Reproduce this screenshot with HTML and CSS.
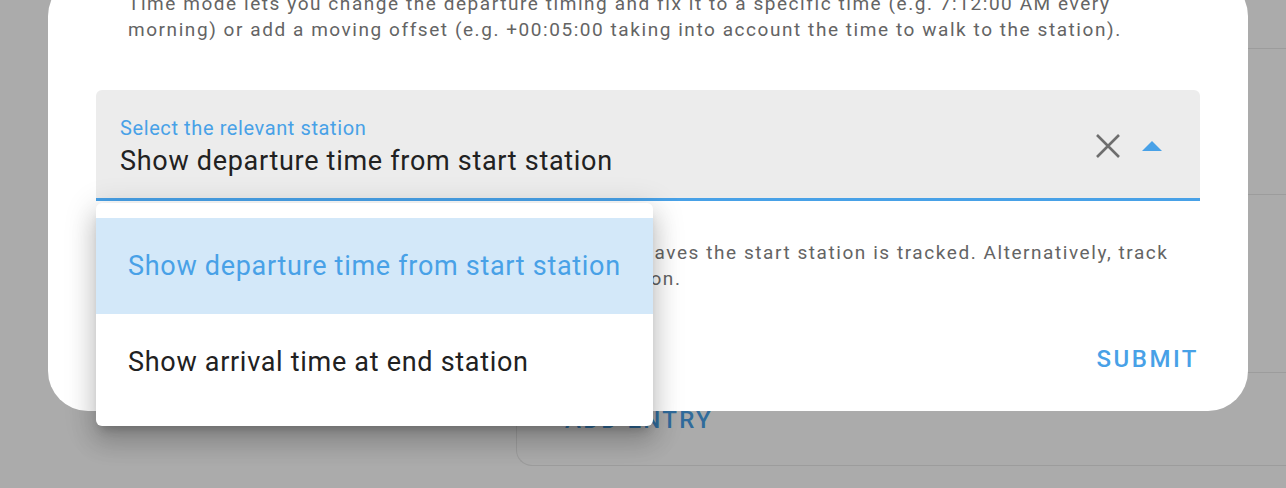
FILE: index.html
```html
<!DOCTYPE html>
<html lang="en">
<head>
<meta charset="utf-8">
<title>Options</title>
<link rel="stylesheet" href="styles.css">
</head>
<body>
<div class="page">
  <div class="card">
    <div class="row row-a"></div>
    <div class="row row-b"></div>
    <div class="row row-c"></div>
    <div class="row row-d"><span class="add-entry">ADD ENTRY</span></div>
  </div>
</div>

<div class="dialog">
  <p class="desc desc-top">Time mode lets you change the departure timing and fix it to a specific time (e.g. 7:12:00 AM every morning) or add a moving offset (e.g. +00:05:00 taking into account the time to walk to the station).</p>

  <div class="field">
    <div class="field-text">
      <div class="field-label">Select the relevant station</div>
      <div class="field-value">Show departure time from start station</div>
    </div>
    <div class="field-icons">
      <svg class="icon-clear" width="24" height="24" viewBox="0 0 24 24"><path d="M1 1 L23 23 M23 1 L1 23" stroke="#6e6e6e" stroke-width="2.6" fill="none"/></svg>
      <svg class="icon-arrow" width="20" height="10" viewBox="0 0 20 10"><polygon points="0,10 10,0 20,10" fill="#48a1e7"/></svg>
    </div>
  </div>

  <p class="desc desc-bottom">In the default mode, the moment at which the train leaves the start station is tracked. Alternatively, track the arrival time of your trains at the destination station.</p>

  <div class="actions">
    <span class="submit">SUBMIT</span>
  </div>
</div>

<div class="menu">
  <div class="menu-item selected">Show departure time from start station</div>
  <div class="menu-item">Show arrival time at end station</div>
</div>
</body>
</html>
```

FILE: styles.css
```css
html, body {
  margin: 0;
  padding: 0;
  width: 1286px;
  height: 488px;
  overflow: hidden;
  background: #ababab;
  font-family: Roboto, "Noto Sans", sans-serif;
}

body {
  position: relative;
}

.page {
  padding-left: 516px;
}

.card {
  border-left: 1px solid #9c9c9c;
  border-bottom: 1px solid #9c9c9c;
  border-radius: 0 0 0 16px;
}

.row {
  border-bottom: 1px solid #9c9c9c;
}

.row-a { height: 48px; }
.row-b { height: 145px; }
.row-c { height: 177px; }
.row-d {
  height: 92px;
  border-bottom: none;
  display: flex;
  align-items: center;
  padding-left: 48px;
}

.add-entry {
  font-size: 24px;
  font-weight: 500;
  letter-spacing: 2.3px;
  color: #306b9b;
  line-height: 36px;
  margin-top: 2px;
}

.dialog {
  position: absolute;
  left: 48px;
  top: -24px;
  width: 1200px;
  height: 435px;
  box-sizing: border-box;
  background: #fff;
  border-radius: 40px;
  padding: 15px 48px 0 48px;
  display: flex;
  flex-direction: column;
}

.desc {
  margin: 0;
  padding: 0 26px 0 32px;
  font-size: 19px;
  line-height: 26px;
  letter-spacing: 1.56px;
  color: #646464;
}

.field {
  margin-top: 47px;
  height: 108px;
  background: #ececec;
  border-bottom: 3px solid #48a1e7;
  border-radius: 6px 6px 0 0;
  display: flex;
  align-items: flex-start;
  justify-content: space-between;
}

.field-text {
  padding: 26px 0 0 24px;
}

.field-label {
  font-size: 20px;
  line-height: 24px;
  letter-spacing: 0.6px;
  color: #48a1e7;
}

.field-value {
  margin-top: 4px;
  font-size: 27px;
  line-height: 34px;
  letter-spacing: 0.7px;
  color: #212121;
}

.field-icons {
  display: flex;
  align-items: center;
  gap: 22px;
  padding: 44px 38px 0 0;
}

.icon-clear {
  display: block;
}

.icon-arrow {
  display: block;
}

.desc-bottom {
  margin-top: 39px;
}

.actions {
  margin-top: 49px;
  display: flex;
  justify-content: flex-end;
  padding-right: 1px;
}

.submit {
  font-size: 24px;
  font-weight: 500;
  letter-spacing: 2.5px;
  line-height: 36px;
  color: #48a1e7;
}

.menu {
  position: absolute;
  left: 96px;
  top: 203px;
  width: 557px;
  height: 223px;
  box-sizing: border-box;
  padding-top: 15px;
  background: #fff;
  border-radius: 6px;
  box-shadow: 0 8px 10px -5px rgba(0,0,0,0.2), 0 16px 24px 2px rgba(0,0,0,0.14), 0 6px 30px 5px rgba(0,0,0,0.12);
}

.menu-item {
  height: 96px;
  display: flex;
  align-items: center;
  padding-left: 32px;
  font-size: 27px;
  letter-spacing: 0.7px;
  color: #212121;
}

.menu-item.selected {
  background: #d3e8f9;
  color: #48a1e7;
}
```
